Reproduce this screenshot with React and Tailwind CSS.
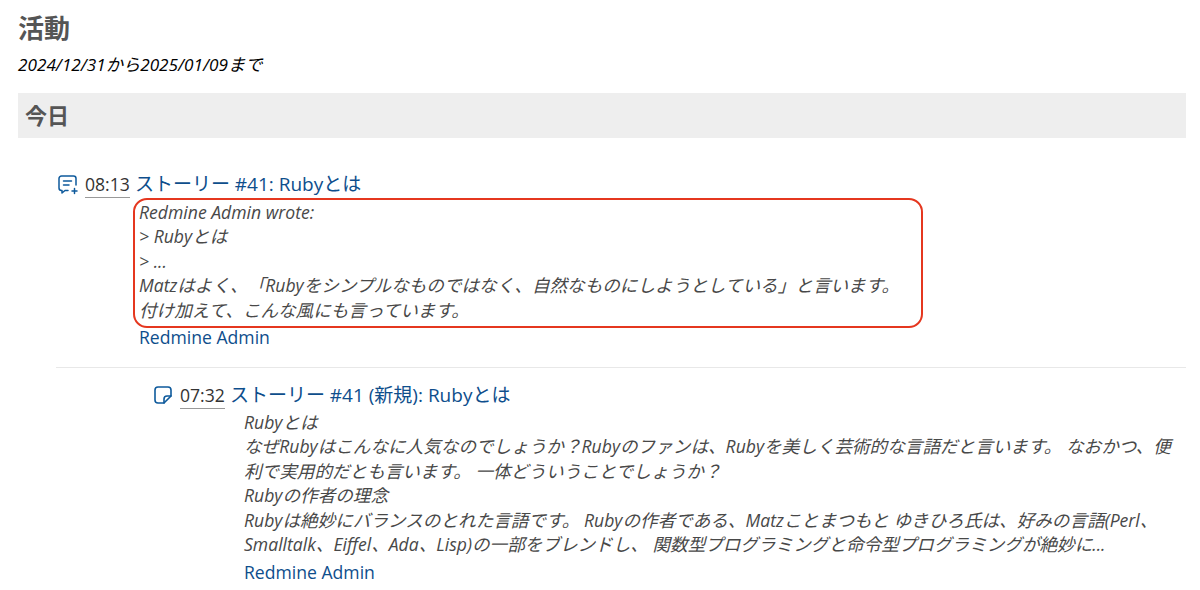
const font = { fontFamily: '"Open Sans", "Noto Sans CJK JP", sans-serif' };

function CommentIcon() {
  return (
    <svg width="22" height="22" viewBox="0 0 22 22" fill="none" stroke="#0e5a9c" strokeWidth="1.5" strokeLinecap="round" strokeLinejoin="round" className="shrink-0">
      <path d="M11 17.5H8l-3 2.5v-2.5H4.5A2.5 2.5 0 0 1 2 15V5.5A2.5 2.5 0 0 1 4.5 3h12A2.5 2.5 0 0 1 19 5.5V12" />
      <path d="M6.5 8h8M6.5 12h5.5" />
      <path d="M15 18h5M17.5 15.5v5" />
    </svg>
  );
}

function NoteIcon() {
  return (
    <svg width="20" height="20" viewBox="0 0 20 20" fill="none" stroke="#0e5a9c" strokeWidth="1.6" strokeLinecap="round" strokeLinejoin="round" className="shrink-0">
      <path d="M11 18H5a3 3 0 0 1-3-3V5a3 3 0 0 1 3-3h10a3 3 0 0 1 3 3v6l-7 7z" />
      <path d="M11 18v-4a3 3 0 0 1 3-3h4" />
    </svg>
  );
}

function Time({ children }) {
  return <span className="border-b border-[#999] leading-[22px] text-[#333] text-[17.6px] mr-[5px] mt-[2px] pb-[2px]">{children}</span>;
}

export default function App() {
  return (
    <div className="w-[1200px] h-[590px] overflow-hidden bg-white px-[18px] text-[#333] [text-spacing-trim:space-all]" style={font}>
      <h2 className="text-[26px] font-bold leading-[36px] pt-[10px] text-[#555] h-[46px]">活動</h2>
      <p className="italic text-[17.2px] leading-[24px] mt-[7px] text-black">2024/12/31から2025/01/09まで</p>

      <h3 className="mt-[16px] h-[45px] bg-[#eeeeee] pl-[7px] text-[22px] font-bold leading-[45px] text-[#555] w-[1168px]">今日</h3>

      <div className="mt-[34px] pl-[39px]">
        <div className="flex items-center h-[24px] gap-[6px]">
          <CommentIcon />
          <div className="flex items-center">
            <Time>08:13</Time>
            <a className="text-[19px] text-[#0e4e8c] leading-[24px]">ストーリー #41: Rubyとは</a>
          </div>
        </div>
        <div className="ml-[76px] mt-[2px] w-[790px] h-[130px] border-2 border-[#e5371f] rounded-[14px] px-[5px] italic text-[17.6px] leading-[24.4px] text-[#484848]">
          <div className="-ml-[1px]">Redmine Admin wrote:</div>
          <div className="-ml-[1px]">&gt; Rubyとは</div>
          <div className="-ml-[1px]">&gt; ...</div>
          <div className="-ml-[1px]">Matzはよく、「Rubyをシンプルなものではなく、自然なものにしようとしている」と言います。</div>
          <div className="-ml-[1px]">付け加えて、こんな風にも言っています。</div>
        </div>
        <a className="block ml-[82px] text-[17.6px] leading-[18px] text-[#0e4e8c]">Redmine Admin</a>
      </div>

      <div className="mt-[21px] ml-[38px] w-[1130px] border-t border-[#e8e8e8]" />

      <div className="mt-[15px] pl-[135px]">
        <div className="flex items-center h-[24px] gap-[7px]">
          <NoteIcon />
          <div className="flex items-center">
            <Time>07:32</Time>
            <a className="text-[19px] text-[#0e4e8c] leading-[24px]">ストーリー #41 (新規): Rubyとは</a>
          </div>
        </div>
        <div className="ml-[91px] mt-[3px] w-[942px] italic text-[17.6px] leading-[24.4px] text-[#484848]">
          <div>Rubyとは</div>
          <div>なぜRubyはこんなに人気なのでしょうか？Rubyのファンは、Rubyを美しく芸術的な言語だと言います。 なおかつ、便利で実用的だとも言います。 一体どういうことでしょうか？</div>
          <div>Rubyの作者の理念</div>
          <div>Rubyは絶妙にバランスのとれた言語です。 Rubyの作者である、Matzことまつもと ゆきひろ氏は、好みの言語(Perl、Smalltalk、Eiffel、Ada、Lisp)の一部をブレンドし、 関数型プログラミングと命令型プログラミングが絶妙に...</div>
        </div>
        <a className="block ml-[91px] mt-[4px] text-[17.6px] leading-[24px] text-[#0e4e8c]">Redmine Admin</a>
      </div>
    </div>
  );
}
